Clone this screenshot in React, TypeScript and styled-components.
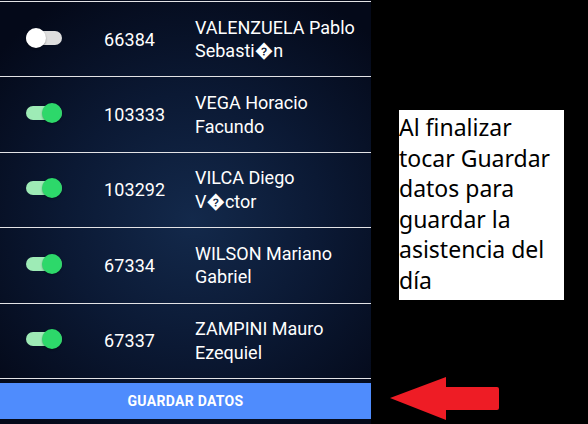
import React, { useState } from "react";
import styled, { createGlobalStyle } from "styled-components";

const Global = createGlobalStyle`
  html, body { margin: 0; padding: 0; background: #000; overflow: hidden; }
  * { box-sizing: border-box; }
`;

const Page = styled.div`
  display: flex;
  width: 588px;
  height: 424px;
  background: #000;
`;

const Panel = styled.div`
  width: 371px;
  height: 424px;
  display: flex;
  flex-direction: column;
  background: radial-gradient(ellipse 70% 60% at 52% 52%, #13294b 0%, #0b1934 50%, #040919 100%);
  font-family: Roboto, "Liberation Sans", sans-serif;
  color: #fff;
`;

const List = styled.div`
  padding-top: 1px;
  display: flex;
  flex-direction: column;
`;

const Row = styled.div<{ $last?: boolean }>`
  display: grid;
  grid-template-columns: 78px 91px 1fr;
  align-items: center;
  height: 75.4px;
  padding-left: 26px;
  border-top: 1px solid #e3e3e6;
  ${(p) => (p.$last ? "border-bottom: 1px solid #e3e3e6; height: 76.4px;" : "")}
`;

const Track = styled.button<{ $on: boolean }>`
  position: relative;
  width: 36px;
  height: 14px;
  padding: 0;
  border: none;
  border-radius: 7px;
  background: ${(p) => (p.$on ? "#9eebb6" : "#dedede")};
  cursor: pointer;
`;

const Thumb = styled.span<{ $on: boolean }>`
  position: absolute;
  top: -3px;
  left: ${(p) => (p.$on ? "16px" : "0px")};
  width: 20px;
  height: 20px;
  border-radius: 50%;
  background: ${(p) => (p.$on ? "#2dd86a" : "#ffffff")};
  box-shadow: 0 1px 2px rgba(0, 0, 0, 0.35);
`;

const Num = styled.div`
  font-size: 18px;
  font-weight: 400;
  letter-spacing: 0.1px;
`;

const Name = styled.div`
  font-size: 18px;
  line-height: 23.5px;
  font-weight: 400;
  padding-right: 8px;
`;

const SaveButton = styled.button`
  margin-top: 4px;
  height: 36px;
  width: 100%;
  border: none;
  background: #4f8cfd;
  color: #fff;
  font-family: Roboto, "Liberation Sans", sans-serif;
  font-weight: 700;
  font-size: 14px;
  letter-spacing: 0.3px;
  cursor: pointer;
`;

const Side = styled.div`
  flex: 1;
  display: flex;
  flex-direction: column;
  align-items: flex-start;
  padding-top: 110px;
`;

const Note = styled.div`
  margin-left: 28px;
  width: 165px;
  height: 190px;
  background: #fff;
  color: #000;
  font-family: "Noto Sans", "Open Sans", sans-serif;
  font-size: 23px;
  line-height: 30.5px;
  padding-top: 2px;
`;

const ArrowWrap = styled.div`
  margin-top: 76px;
  margin-left: 18px;
  line-height: 0;
`;

const students = [
  { on: false, num: "66384", l1: "VALENZUELA Pablo", l2: "Sebasti\uFFFDn" },
  { on: true, num: "103333", l1: "VEGA Horacio", l2: "Facundo" },
  { on: true, num: "103292", l1: "VILCA Diego", l2: "V\uFFFDctor" },
  { on: true, num: "67334", l1: "WILSON Mariano", l2: "Gabriel" },
  { on: true, num: "67337", l1: "ZAMPINI Mauro", l2: "Ezequiel" },
];

export default function App() {
  const [state, setState] = useState(students.map((s) => s.on));
  return (
    <>
      <Global />
      <Page>
        <Panel>
          <List>
            {students.map((s, i) => (
              <Row key={s.num} $last={i === students.length - 1}>
                <div>
                  <Track
                    $on={state[i]}
                    onClick={() => setState(state.map((v, j) => (j === i ? !v : v)))}
                  >
                    <Thumb $on={state[i]} />
                  </Track>
                </div>
                <Num>{s.num}</Num>
                <Name>
                  {s.l1}
                  <br />
                  {s.l2}
                </Name>
              </Row>
            ))}
          </List>
          <SaveButton>GUARDAR DATOS</SaveButton>
        </Panel>
        <Side>
          <Note>
            Al finalizar tocar Guardar datos para guardar la asistencia del día
          </Note>
          <ArrowWrap>
            <svg width="112" height="46" viewBox="0 0 112 46">
              <path
                d="M1 22 L57 1 L57 11 L108 11 Q110 11 110 13 L110 32 Q110 34 108 34 L57 34 L57 44 Z"
                fill="#ee1c25"
              />
            </svg>
          </ArrowWrap>
        </Side>
      </Page>
    </>
  );
}
